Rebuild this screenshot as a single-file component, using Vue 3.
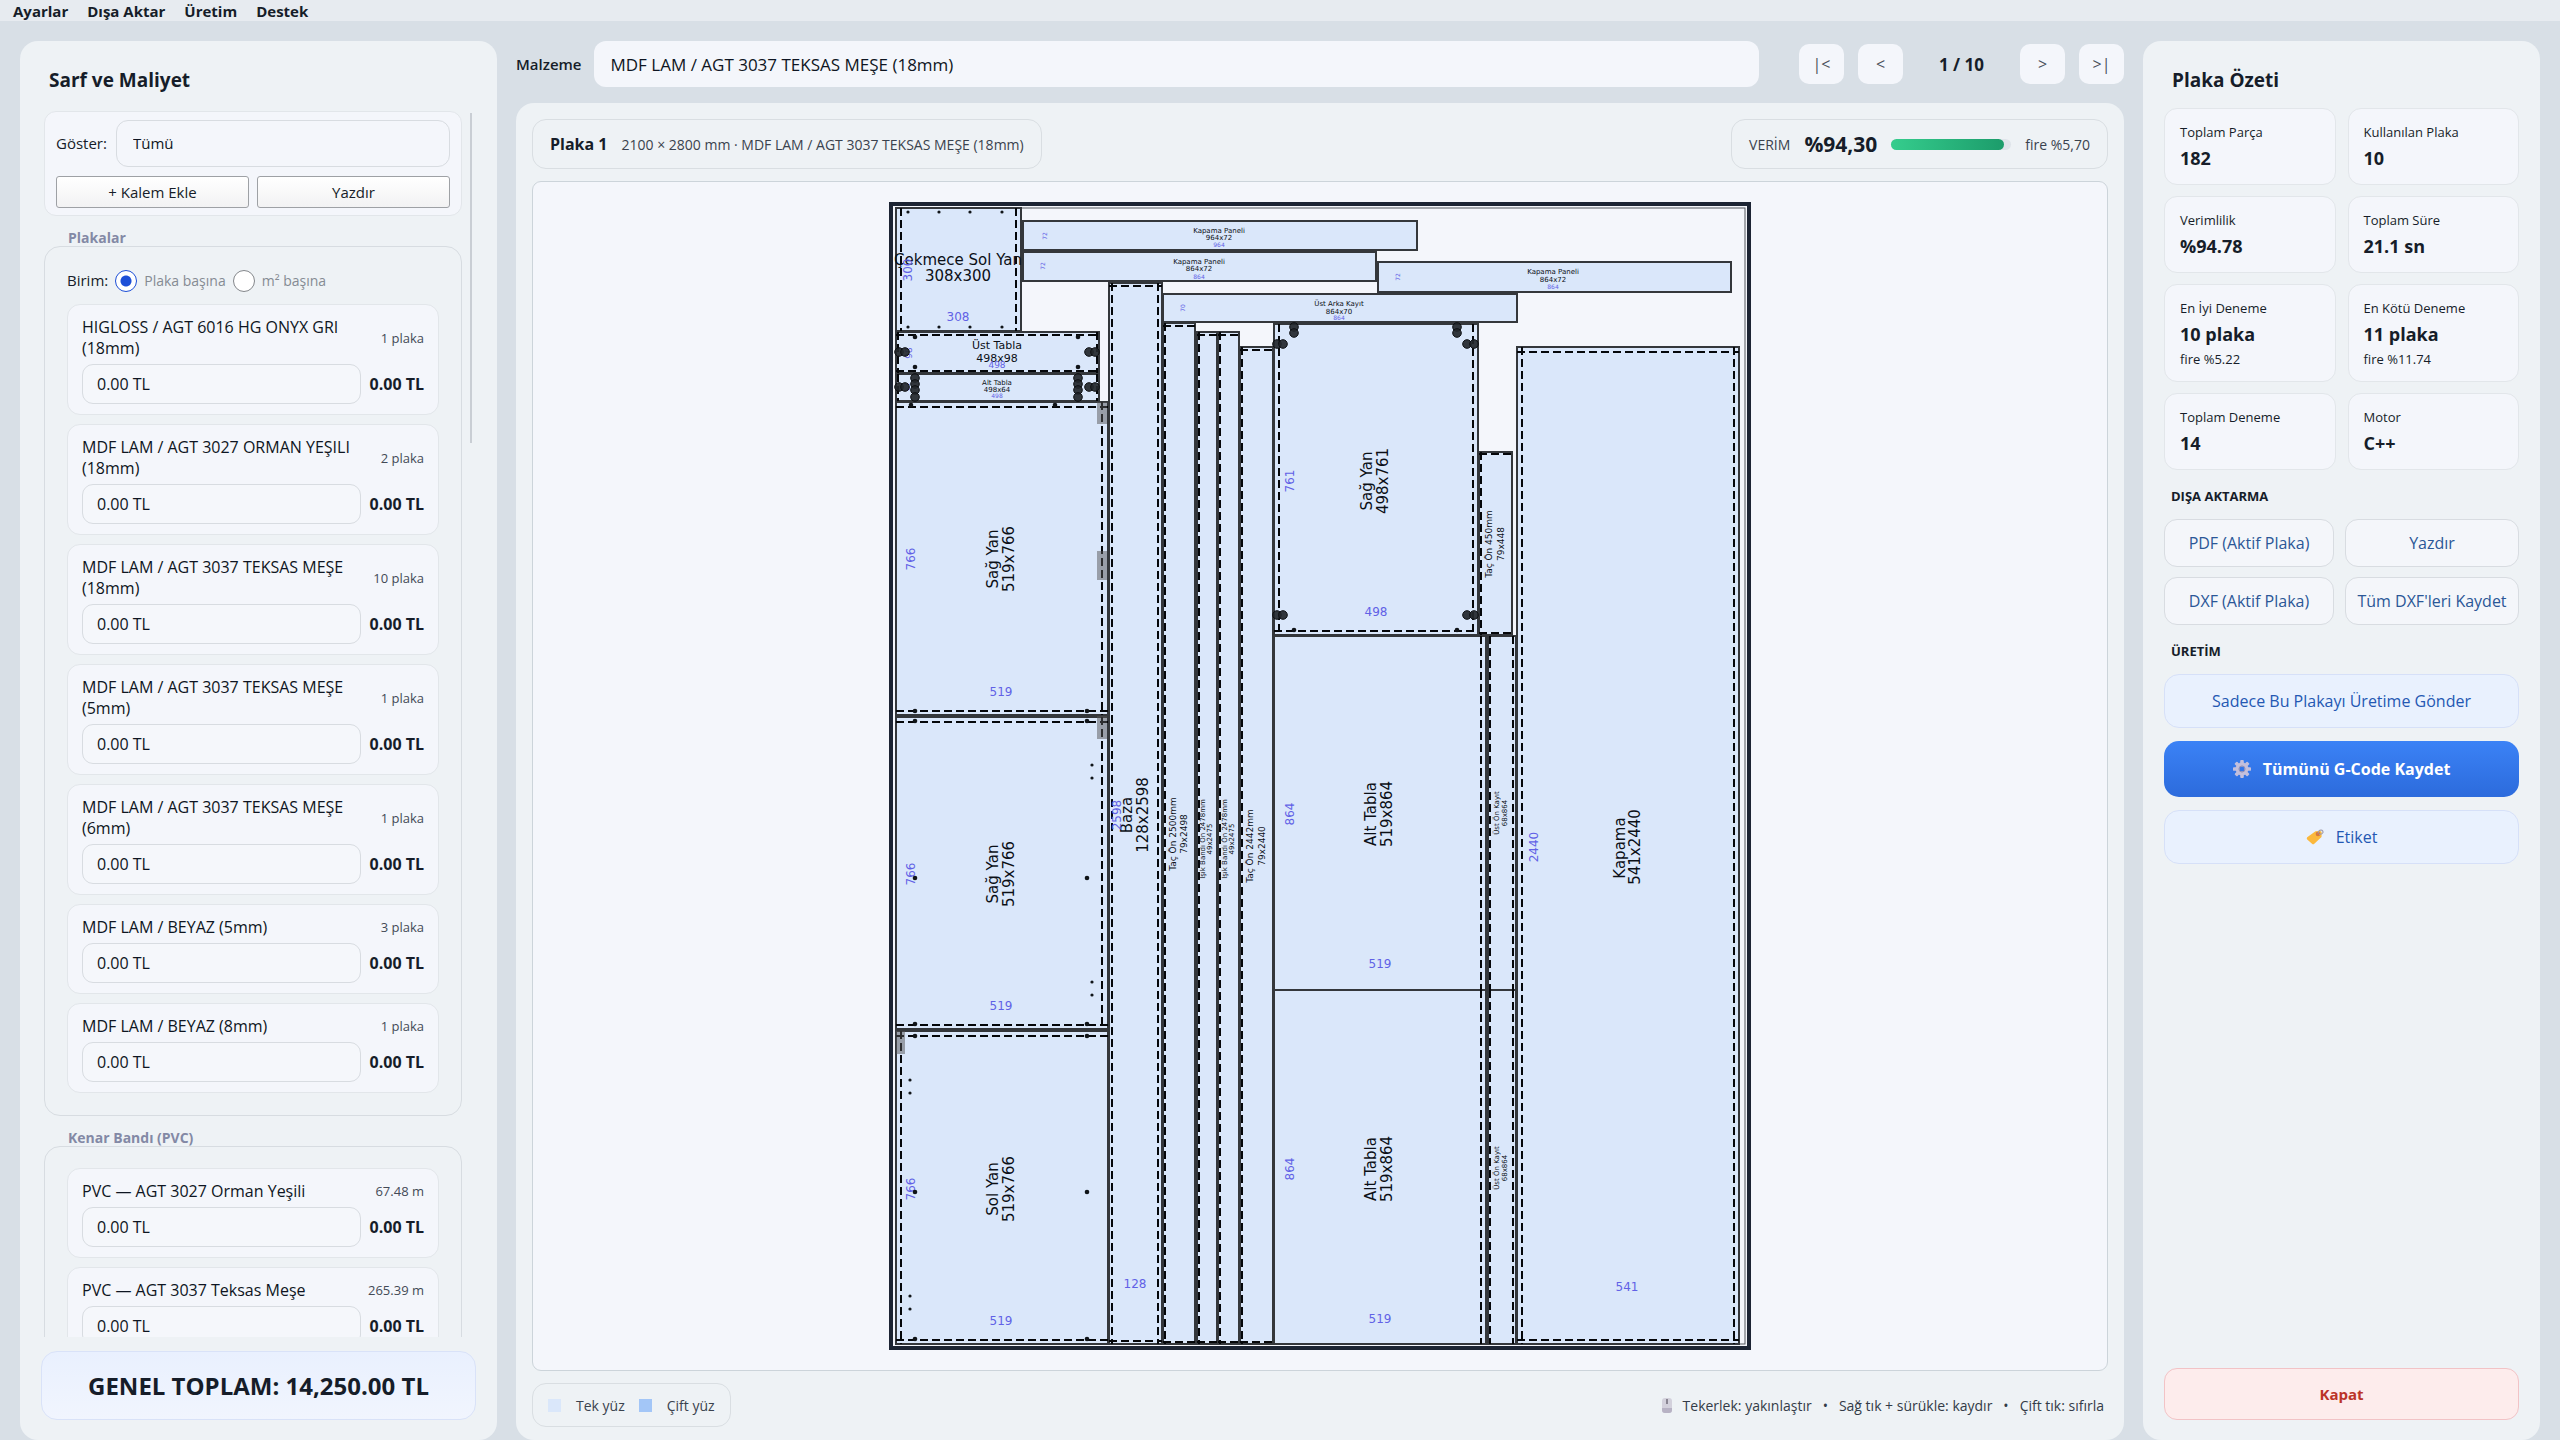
<script setup>
import { ref } from 'vue'

const menus = ['Ayarlar', 'Dışa Aktar', 'Üretim', 'Destek']

const plates = [
  { name: 'HIGLOSS / AGT 6016 HG ONYX GRI (18mm)', qty: '1 plaka' },
  { name: 'MDF LAM / AGT 3027 ORMAN YEŞILI (18mm)', qty: '2 plaka' },
  { name: 'MDF LAM / AGT 3037 TEKSAS MEŞE (18mm)', qty: '10 plaka' },
  { name: 'MDF LAM / AGT 3037 TEKSAS MEŞE (5mm)', qty: '1 plaka' },
  { name: 'MDF LAM / AGT 3037 TEKSAS MEŞE (6mm)', qty: '1 plaka' },
  { name: 'MDF LAM / BEYAZ (5mm)', qty: '3 plaka' },
  { name: 'MDF LAM / BEYAZ (8mm)', qty: '1 plaka' },
]
const bands = [
  { name: 'PVC — AGT 3027 Orman Yeşili', qty: '67.48 m' },
  { name: 'PVC — AGT 3037 Teksas Meşe', qty: '265.39 m' },
]
const groups = [
  { title: 'Plakalar', unit: true, items: plates },
  { title: 'Kenar Bandı (PVC)', unit: false, items: bands },
]
const unit = ref('plate')

const stats = [
  { label: 'Toplam Parça', value: '182' },
  { label: 'Kullanılan Plaka', value: '10' },
  { label: 'Verimlilik', value: '%94.78' },
  { label: 'Toplam Süre', value: '21.1 sn' },
  { label: 'En İyi Deneme', value: '10 plaka', note: 'fire %5.22' },
  { label: 'En Kötü Deneme', value: '11 plaka', note: 'fire %11.74' },
  { label: 'Toplam Deneme', value: '14' },
  { label: 'Motor', value: 'C++' },
]
const exportsList = ['PDF (Aktif Plaka)', 'Yazdır', 'DXF (Aktif Plaka)', "Tüm DXF'leri Kaydet"]
const yieldPct = 94.3

// box: x1, y1, x2, y2 — band: banded edges as l / r / t / b with their coordinate
const parts = [
  { box: [896, 208, 1021, 331], band: { l: 901, r: 1016 } },
  { box: [896, 332, 1099, 373], band: { l: 898, r: 1097, t: 335, b: 371 } },
  { box: [896, 374, 1099, 401], band: { l: 898, r: 1097 } },
  { box: [896, 402, 1108, 715], band: { r: 1102, t: 407, b: 711 } },
  { box: [896, 717, 1108, 1029], band: { r: 1102, t: 722, b: 1025 } },
  { box: [896, 1031, 1108, 1344], band: { l: 901, t: 1036, b: 1340 } },
  { box: [1109, 283, 1162, 1344], band: { l: 1112, r: 1158, t: 286, b: 1341 } },
  { box: [1163, 323, 1195, 1344], band: { l: 1165, t: 326, b: 1342 } },
  { box: [1197, 332, 1217, 1344], band: { l: 1199, t: 335, b: 1342 } },
  { box: [1218, 332, 1239, 1344], band: { l: 1220, t: 335, b: 1342 } },
  { box: [1240, 347, 1273, 1344], band: { l: 1242, t: 350, b: 1342 } },
  { box: [1023, 221, 1417, 250], band: {} },
  { box: [1023, 252, 1376, 281], band: {} },
  { box: [1378, 262, 1731, 292], band: {} },
  { box: [1163, 294, 1517, 322], band: {} },
  { box: [1274, 324, 1478, 635], band: { l: 1279, r: 1473, b: 631 } },
  { box: [1479, 452, 1512, 635], band: { l: 1481, t: 454, b: 633 } },
  { box: [1274, 636, 1486, 990], band: { r: 1481 } },
  { box: [1274, 990, 1486, 1344], band: { r: 1481 } },
  { box: [1488, 636, 1516, 990], band: { l: 1490, r: 1513 } },
  { box: [1488, 990, 1516, 1344], band: { l: 1490, r: 1513 } },
  { box: [1517, 347, 1739, 1344], band: { l: 1522, r: 1734, t: 352, b: 1340 } },
]
function bandPath(p) {
  const [x1, y1, x2, y2] = p.box
  const b = p.band
  let d = ''
  if (b.l) d += `M${b.l} ${y1}V${y2}`
  if (b.r) d += `M${b.r} ${y1}V${y2}`
  if (b.t) d += `M${x1} ${b.t}H${x2}`
  if (b.b) d += `M${x1} ${b.b}H${x2}`
  return d
}

// text, centre x, centre y, size, rotated
const names = [
  ['Çekmece Sol Yan', 958, 260, 15], ['308x300', 958, 276, 15],
  ['Üst Tabla', 997, 345, 11], ['498x98', 997, 358, 11],
  ['Alt Tabla', 997, 383, 7], ['498x64', 997, 390, 7],
  ['Kapama Paneli', 1219, 231, 7], ['964x72', 1219, 238, 7],
  ['Kapama Paneli', 1199, 262, 7], ['864x72', 1199, 269, 7],
  ['Kapama Paneli', 1553, 272, 7], ['864x72', 1553, 280, 7],
  ['Üst Arka Kayıt', 1339, 304, 7], ['864x70', 1339, 312, 7],
  ['Sağ Yan', 993, 559, 15, 1], ['519x766', 1009, 559, 15, 1],
  ['Sağ Yan', 993, 874, 15, 1], ['519x766', 1009, 874, 15, 1],
  ['Sol Yan', 993, 1189, 15, 1], ['519x766', 1009, 1189, 15, 1],
  ['Baza', 1127, 815, 15, 1], ['128x2598', 1143, 815, 15, 1],
  ['Taç Ön 2500mm', 1173, 834, 9, 1], ['79x2498', 1184, 834, 9, 1],
  ['Işık Bandı Ön 2478mm', 1203, 839, 7, 1], ['49x2475', 1210, 839, 7, 1],
  ['Işık Bandı Ön 2478mm', 1225, 839, 7, 1], ['49x2475', 1232, 839, 7, 1],
  ['Taç Ön 2442mm', 1250, 846, 9, 1], ['79x2440', 1262, 846, 9, 1],
  ['Sağ Yan', 1367, 481, 15, 1], ['498x761', 1383, 481, 15, 1],
  ['Taç Ön 450mm', 1489, 544, 9, 1], ['79x448', 1501, 544, 9, 1],
  ['Alt Tabla', 1371, 814, 15, 1], ['519x864', 1387, 814, 15, 1],
  ['Alt Tabla', 1371, 1169, 15, 1], ['519x864', 1387, 1169, 15, 1],
  ['Üst Ön Kayıt', 1497, 813, 7, 1], ['68x864', 1505, 813, 7, 1],
  ['Üst Ön Kayıt', 1497, 1168, 7, 1], ['68x864', 1505, 1168, 7, 1],
  ['Kapama', 1620, 848, 15, 1], ['541x2440', 1635, 847, 15, 1],
]
const dims = [
  ['308', 958, 317, 12], ['300', 908, 270, 12, 1],
  ['498', 997, 365, 9], ['98', 909, 353, 9, 1],
  ['498', 997, 395, 6], ['64', 907, 387, 6, 1],
  ['964', 1219, 244, 6], ['72', 1044, 236, 6, 1],
  ['864', 1199, 276, 6], ['72', 1042, 266, 6, 1],
  ['864', 1553, 286, 6], ['72', 1397, 277, 6, 1],
  ['864', 1339, 317, 6], ['70', 1182, 308, 6, 1],
  ['766', 911, 559, 12, 1], ['519', 1001, 692, 12],
  ['766', 911, 874, 12, 1], ['519', 1001, 1006, 12],
  ['766', 911, 1189, 12, 1], ['519', 1001, 1321, 12],
  ['2598', 1117, 815, 12, 1], ['128', 1135, 1284, 12],
  ['761', 1290, 481, 12, 1], ['498', 1376, 612, 12],
  ['864', 1290, 814, 12, 1], ['519', 1380, 964, 12],
  ['864', 1290, 1169, 12, 1], ['519', 1380, 1319, 12],
  ['2440', 1534, 847, 12, 1], ['541', 1627, 1287, 12],
]
const labels = [
  ...names.map((t) => ({ t, fill: '#0b0f16' })),
  ...dims.map((t) => ({ t, fill: '#6161e6' })),
]

const grooves = [
  [1097, 402, 10, 22], [1097, 551, 10, 29], [1097, 716, 10, 23], [896, 1031, 9, 23],
]
const cams = [
  [899, 352], [905, 352], [1089, 352], [1095, 352],
  [899, 387], [905, 387], [1089, 387], [1095, 387],
  [915, 378], [915, 384], [915, 390], [915, 397],
  [1078, 378], [1078, 384], [1078, 390], [1078, 397],
  [1294, 327], [1294, 333], [1457, 327], [1457, 333],
  [1277, 344], [1283, 344], [1467, 344], [1474, 344],
  [1277, 615], [1283, 615], [1467, 615], [1474, 615],
]
const holes = [
  [915, 337], [1078, 337], [915, 367], [1078, 367],
  [915, 711], [1087, 711], [915, 721], [1087, 721], [915, 1024], [1087, 1024],
  [915, 1036], [1087, 1036], [915, 1339], [1087, 1339],
  [915, 878], [1087, 878], [915, 1192], [1087, 1192],
  [1294, 630], [1457, 630], [911, 405], [1055, 405],
]
const pins = [
  [908, 212], [939, 212], [970, 212], [1002, 212],
  [908, 327], [939, 327], [970, 327], [1002, 327],
  [1092, 765], [1092, 778], [1092, 982], [1092, 995],
  [910, 1080], [910, 1093], [910, 1296], [910, 1309],
]
</script>

<template>
  <div class="app">
    <nav class="menubar">
      <button v-for="m in menus" :key="m" type="button">{{ m }}</button>
    </nav>

    <div class="workspace">
      <aside class="panel cost">
        <h2>Sarf ve Maliyet</h2>
        <div class="scroller">
          <div class="list">
            <section class="filter">
              <div class="filter-row">
                <label for="show">Göster:</label>
                <select id="show"><option>Tümü</option></select>
              </div>
              <div class="filter-actions">
                <button type="button">+ Kalem Ekle</button>
                <button type="button">Yazdır</button>
              </div>
            </section>

            <section v-for="(g, gi) in groups" :key="g.title" class="group">
              <h3>{{ g.title }}</h3>
              <div class="group-box">
                <div v-if="g.unit" class="units">
                  <span>Birim:</span>
                  <label><input v-model="unit" type="radio" name="unit" value="plate" />Plaka başına</label>
                  <label><input v-model="unit" type="radio" name="unit" value="area" />m² başına</label>
                </div>
                <article v-for="(it, i) in g.items" :key="it.name" class="item">
                  <div class="item-head">
                    <label :for="`price-${gi}-${i}`">{{ it.name }}</label>
                    <span>{{ it.qty }}</span>
                  </div>
                  <div class="item-price">
                    <input :id="`price-${gi}-${i}`" type="text" value="0.00 TL" />
                    <strong>0.00 TL</strong>
                  </div>
                </article>
              </div>
            </section>
          </div>
          <div class="track"><div class="thumb"></div></div>
        </div>
        <div class="total">GENEL TOPLAM: 14,250.00 TL</div>
      </aside>

      <main class="center">
        <div class="toolbar">
          <label for="material">Malzeme</label>
          <select id="material"><option>MDF LAM / AGT 3037 TEKSAS MEŞE (18mm)</option></select>
          <div class="pager">
            <button type="button" aria-label="İlk plaka">|&lt;</button>
            <button type="button" aria-label="Önceki plaka">&lt;</button>
            <span>1 / 10</span>
            <button type="button" aria-label="Sonraki plaka">&gt;</button>
            <button type="button" aria-label="Son plaka">&gt;|</button>
          </div>
        </div>

        <section class="panel viewer">
          <header class="viewer-head">
            <div class="pill">
              <strong>Plaka 1</strong>
              <span>2100 × 2800 mm · MDF LAM / AGT 3037 TEKSAS MEŞE (18mm)</span>
            </div>
            <div class="pill yield">
              <span>VERİM</span>
              <b>%94,30</b>
              <div class="bar"><div :style="{ width: yieldPct + '%' }"></div></div>
              <span>fire %5,70</span>
            </div>
          </header>

          <div class="canvas">
            <svg viewBox="888 202 864 1148" role="img" aria-label="Plaka 1 yerleşimi">
              <rect x="891" y="204" width="858" height="1144" fill="#f4f6fb" stroke="#1c2433" stroke-width="4" />
              <rect x="896" y="208" width="849" height="1136" fill="none" stroke="#55585e" stroke-width="1" />
              <g fill="#dae7fa" stroke="#34373b" stroke-width="2">
                <rect v-for="(p, i) in parts" :key="i" :x="p.box[0]" :y="p.box[1]" :width="p.box[2] - p.box[0]" :height="p.box[3] - p.box[1]" />
              </g>
              <path v-for="(p, i) in parts" :key="'b' + i" :d="bandPath(p)" fill="none" stroke="#05070a" stroke-width="2" stroke-dasharray="8 4" />
              <rect v-for="(g, i) in grooves" :key="'g' + i" :x="g[0]" :y="g[1]" :width="g[2]" :height="g[3]" fill="#555" opacity="0.5" />
              <g class="drawing-text">
                <text
                  v-for="({ t, fill }, i) in labels"
                  :key="'t' + i"
                  :x="t[1]"
                  :y="t[2]"
                  :font-size="t[3]"
                  :fill="fill"
                  :transform="t[4] ? `rotate(-90 ${t[1]} ${t[2]})` : undefined"
                  text-anchor="middle"
                  dominant-baseline="central"
                >{{ t[0] }}</text>
              </g>
              <circle v-for="(c, i) in cams" :key="'c' + i" :cx="c[0]" :cy="c[1]" r="4.3" fill="#23272b" stroke="#0d0f12" fill-opacity="0.92" />
              <circle v-for="(c, i) in holes" :key="'h' + i" :cx="c[0]" :cy="c[1]" r="2.3" fill="#101418" />
              <circle v-for="(c, i) in pins" :key="'p' + i" :cx="c[0]" :cy="c[1]" r="1.6" fill="#101418" />
            </svg>
          </div>

          <footer class="viewer-foot">
            <div class="pill legend">
              <span><i class="single"></i>Tek yüz</span>
              <span><i class="double"></i>Çift yüz</span>
            </div>
            <p>
              <svg class="mouse" viewBox="0 0 10 15" aria-hidden="true">
                <rect x="0" y="0" width="10" height="15" rx="3" fill="#d3d1dc" />
                <path d="M0 10h10v2a3 3 0 0 1-3 3H3a3 3 0 0 1-3-3z" fill="#b7b2c4" />
                <path d="M5 1v5" stroke="#77727f" stroke-width="1.6" />
              </svg>
              <span>Tekerlek: yakınlaştır</span><span>•</span><span>Sağ tık + sürükle: kaydır</span><span>•</span><span>Çift tık: sıfırla</span>
            </p>
          </footer>
        </section>
      </main>

      <aside class="panel summary">
        <h2>Plaka Özeti</h2>
        <dl class="stats">
          <div v-for="s in stats" :key="s.label">
            <dt>{{ s.label }}</dt>
            <dd>{{ s.value }}</dd>
            <dd v-if="s.note" class="note">{{ s.note }}</dd>
          </div>
        </dl>
        <h3>DIŞA AKTARMA</h3>
        <div class="exports">
          <button v-for="e in exportsList" :key="e" type="button">{{ e }}</button>
        </div>
        <h3>ÜRETİM</h3>
        <div class="production">
          <button type="button">Sadece Bu Plakayı Üretime Gönder</button>
          <button type="button" class="primary">
            <svg viewBox="-10 -10 20 20" width="18" height="18" aria-hidden="true">
              <g fill="#c3bfdc">
                <rect v-for="a in 8" :key="a" x="-2" y="-10" width="4" height="5" rx="1" :transform="`rotate(${a * 45})`" />
              </g>
              <circle r="5" fill="none" stroke="#c3bfdc" stroke-width="4.4" />
              <circle r="3.4" fill="none" stroke="#8f8ab0" stroke-width="1" />
            </svg>
            Tümünü G-Code Kaydet
          </button>
          <button type="button">
            <svg viewBox="0 0 18 16" width="18" height="16" aria-hidden="true">
              <path d="M9.500 2.200 14 2q1.600.2 1.700 1.800L15.500 8 8.300 14.800q-1.200 1-2.300 0L1.200 10.600q-1-1.200 0-2.300z" fill="#fbb83c" />
              <circle cx="12" cy="5" r="2.300" fill="#d7773d" />
              <path d="M12 4.500q.5-3.500 3-3.500 2.300.3 2 2.600-.8 2-4 1.800" fill="none" stroke="#a09cab" stroke-width="1.100" />
            </svg>
            Etiket
          </button>
        </div>
        <button type="button" class="close">Kapat</button>
      </aside>
    </div>
  </div>
</template>

<style>
body {
  margin: 0;
  background: #d8dfe6;
}
</style>

<style scoped>
* {
  box-sizing: border-box;
}
.app {
  display: flex;
  flex-direction: column;
  height: 100vh;
  background: #d8dfe6;
  color: #161d29;
  font: 15px/21px "Open Sans", "Noto Sans", sans-serif;
}
h2, h3, p, dl, dd {
  margin: 0;
}
button, input, select {
  font: inherit;
  color: inherit;
  margin: 0;
}
button {
  padding: 0;
  cursor: pointer;
}
.menubar {
  display: flex;
  flex: none;
  gap: 19px;
  height: 21px;
  padding: 2px 13px 0;
  background: #e7ebf0;
}
.menubar button {
  border: 0;
  background: none;
  font-size: 15px;
  line-height: 19px;
  font-weight: 700;
}
.workspace {
  flex: 1;
  min-height: 0;
  display: grid;
  grid-template-columns: 477px minmax(0, 1fr) 397px;
  gap: 19px;
  padding: 20px 20px 0;
}
.panel {
  background: #eef2f5;
  border-radius: 18px;
}
h2 {
  font-size: 19px;
  line-height: 26px;
  font-weight: 700;
}

.cost {
  display: flex;
  flex-direction: column;
  min-height: 0;
  padding: 26px 21px 20px;
}
.cost h2 {
  padding-left: 8px;
}
.scroller {
  flex: 1;
  min-height: 0;
  display: flex;
  gap: 8px;
  margin: 18px 0 14px;
  padding-left: 3px;
}
.list {
  flex: 1;
  overflow: hidden;
}
.track {
  width: 2px;
  margin-right: 4px;
  padding-top: 2px;
}
.thumb {
  height: 27%;
  background: #c9ced4;
}
.filter {
  display: flex;
  flex-direction: column;
  gap: 9px;
  padding: 8px 11px 7px;
  background: #f4f6fb;
  border: 1px solid #e2e6ea;
  border-radius: 12px;
}
.filter-row {
  display: flex;
  align-items: center;
  gap: 9px;
}
select {
  appearance: none;
  flex: 1;
  min-width: 0;
  height: 47px;
  padding: 0 16px;
  border: 1px solid #d8dce1;
  border-radius: 12px;
  background: #f4f6fb;
  color: #0e1522;
  font-weight: 500;
}
.filter-actions {
  display: grid;
  grid-template-columns: 1fr 1fr;
  gap: 8px;
}
.filter-actions button {
  height: 32px;
  border: 1px solid #9ea1a5;
  border-radius: 3px;
  background: linear-gradient(#fff, #f2f2f3);
}
.group {
  padding-top: 13px;
}
.group h3 {
  padding: 0 24px;
  font-size: 14px;
  line-height: 17px;
  font-weight: 700;
  color: #8389a5;
}
.group-box {
  display: flex;
  flex-direction: column;
  gap: 9px;
  padding: 21px 22px 22px;
  border: 1px solid #d7dce1;
  border-radius: 16px;
}
.units {
  display: flex;
  align-items: center;
  gap: 7px;
  height: 27px;
  padding-bottom: 2px;
}
.units label {
  display: flex;
  align-items: center;
  gap: 7px;
  font-size: 14px;
  color: #858b93;
}
.units input {
  appearance: none;
  width: 22px;
  height: 22px;
  border: 1px solid #84878b;
  border-radius: 50%;
  background: #fff;
}
.units input:checked {
  border-color: #1d4fd7;
  background: radial-gradient(circle, #1d4fd7 5px, #fff 6px);
}
.item {
  padding: 12px 14px 10px;
  background: #f4f6fb;
  border: 1px solid #e2e6ea;
  border-radius: 13px;
}
.item-head {
  display: flex;
  align-items: center;
  justify-content: space-between;
  gap: 16px;
}
.item-head label {
  max-width: 280px;
  color: #0e1522;
  font-size: 16px;
  font-weight: 500;
}
.item-head span {
  font-size: 13px;
  color: #434a56;
  white-space: nowrap;
}
.item-price {
  display: flex;
  align-items: center;
  gap: 9px;
  margin-top: 5px;
}
.item-price input {
  flex: 1;
  min-width: 0;
  height: 40px;
  padding: 0 14px;
  border: 1px solid #d8dce1;
  border-radius: 11px;
  background: #f5f7fb;
  color: #0e1522;
  font-size: 16px;
  font-weight: 500;
}
.item-price strong {
  font-size: 16px;
  font-weight: 700;
}
.total {
  flex: none;
  height: 69px;
  border: 1px solid #d9e2f8;
  border-radius: 16px;
  background: linear-gradient(#e9f0fe, #f1f5fe);
  font-size: 24px;
  line-height: 67px;
  font-weight: 700;
  text-align: center;
}

.center {
  display: flex;
  flex-direction: column;
  gap: 16px;
  min-width: 0;
  min-height: 0;
}
.toolbar {
  display: flex;
  align-items: center;
  gap: 13px;
  height: 46px;
}
.toolbar label {
  font-weight: 600;
}
.toolbar select {
  height: 46px;
  border: 0;
  font-size: 17px;
}
.pager {
  display: flex;
  align-items: center;
  gap: 14px;
  margin-left: 27px;
}
.pager button {
  width: 45px;
  height: 40px;
  border: 0;
  border-radius: 10px;
  background: #f4f6fb;
  color: #4a515c;
  font-size: 16px;
}
.pager span {
  width: 89px;
  text-align: center;
  font-size: 17px;
  font-weight: 700;
}
.viewer {
  flex: 1;
  min-height: 0;
  display: flex;
  flex-direction: column;
  gap: 12px;
  padding: 16px 16px 13px;
}
.viewer-head, .viewer-foot {
  display: flex;
  align-items: center;
  justify-content: space-between;
}
.pill {
  display: flex;
  align-items: center;
  gap: 14px;
  height: 50px;
  padding: 0 17px;
  border: 1px solid #d9dee2;
  border-radius: 14px;
  font-size: 14px;
  color: #3a424e;
}
.pill strong {
  font-size: 16px;
  color: #161d29;
}
.pill b {
  font-size: 21px;
  color: #161d29;
}
.bar {
  width: 120px;
  height: 11px;
  border-radius: 6px;
  background: #dfe4ea;
}
.bar div {
  height: 100%;
  border-radius: 6px;
  background: linear-gradient(90deg, #35cd8d, #1c9c6b);
}
.canvas {
  flex: 1;
  min-height: 0;
  display: flex;
  justify-content: center;
  padding: 20px;
  border: 1px solid #ccd4da;
  border-radius: 9px;
  background: #f4f6fb;
}
.canvas svg {
  height: 100%;
  max-width: 100%;
}
.drawing-text {
  font-family: "DejaVu Sans", sans-serif;
}
.legend {
  height: 44px;
  padding: 0 15px;
}
.legend span {
  display: flex;
  align-items: center;
  gap: 15px;
}
.legend i {
  width: 13px;
  height: 13px;
}
.legend .single {
  background: #dae7fa;
}
.legend .double {
  background: #a3c6f7;
}
.viewer-foot p {
  display: flex;
  align-items: center;
  gap: 11px;
  padding-right: 4px;
  font-size: 14px;
  color: #333b47;
}
.mouse {
  width: 10px;
  height: 15px;
}

.summary {
  display: flex;
  flex-direction: column;
  padding: 26px 21px 20px;
}
.summary h2 {
  padding-left: 8px;
}
.stats {
  display: grid;
  grid-template-columns: 1fr 1fr;
  gap: 11px 12px;
  margin-top: 15px;
}
.stats div {
  padding: 13px 15px 11px;
  background: #f4f6fb;
  border: 1px solid #e2e6ea;
  border-radius: 13px;
}
.stats dt {
  font-size: 13px;
  line-height: 21px;
  font-weight: 500;
}
.stats dd {
  padding-top: 1px;
  font-size: 18px;
  line-height: 29px;
  font-weight: 700;
}
.stats .note {
  padding: 0;
  font-size: 13px;
  line-height: 21px;
  font-weight: 500;
}
.summary h3 {
  padding: 15px 7px 12px;
  font-size: 13px;
  line-height: 22px;
  font-weight: 700;
}
.exports {
  display: grid;
  grid-template-columns: 170px 1fr;
  gap: 10px 11px;
}
.exports button {
  height: 48px;
  border: 1px solid #d8dce1;
  border-radius: 13px;
  background: #f4f6fa;
  color: #2b5797;
  font-size: 16px;
  font-weight: 500;
}
.production {
  display: flex;
  flex-direction: column;
  gap: 13px;
}
.production button {
  display: flex;
  align-items: center;
  justify-content: center;
  gap: 12px;
  height: 54px;
  border: 1px solid #d6e0f8;
  border-radius: 15px;
  background: #e9f1fe;
  color: #2458b3;
  font-size: 16px;
  font-weight: 500;
}
.production .primary {
  height: 56px;
  border: 0;
  background: linear-gradient(#3b82f6, #2c6bdc);
  color: #fff;
  font-weight: 700;
}
.close {
  height: 52px;
  margin-top: auto;
  border: 1px solid #f2c3c6;
  border-radius: 13px;
  background: #fdecec;
  color: #bb3428;
  font-weight: 700;
}
</style>
